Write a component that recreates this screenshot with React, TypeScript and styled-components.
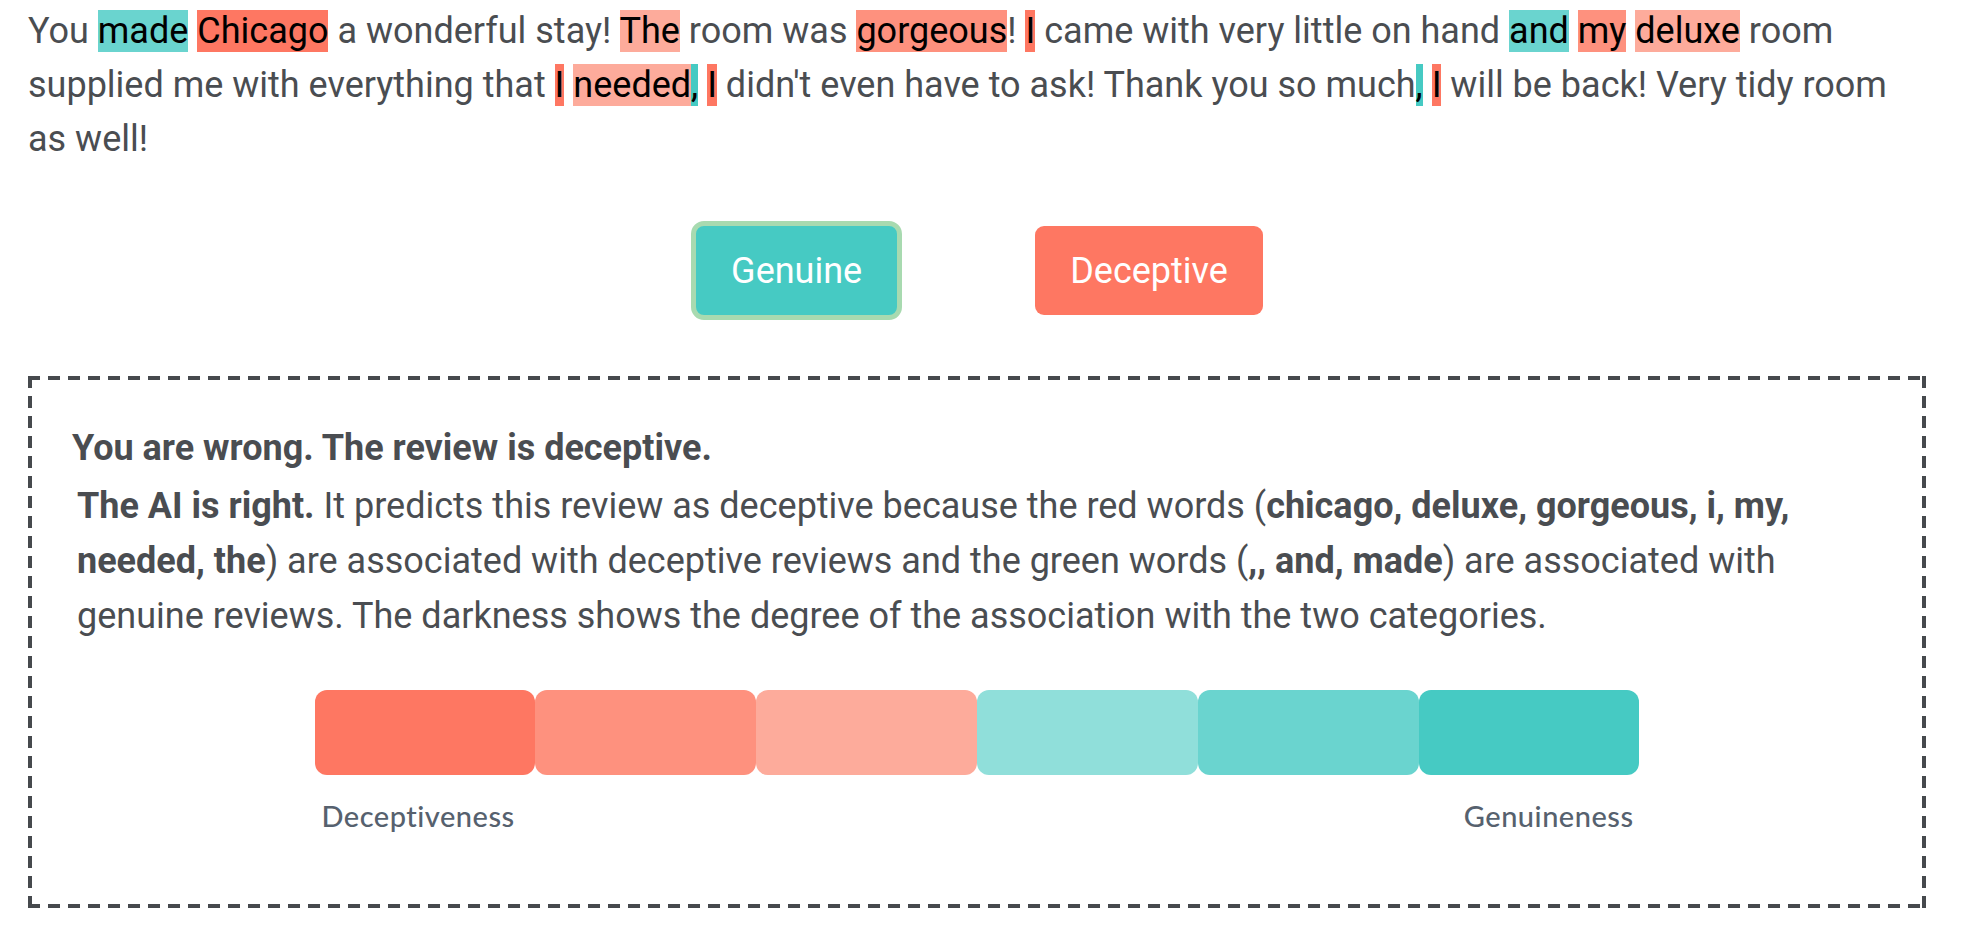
import React from "react";
import styled, { createGlobalStyle } from "styled-components";

const GlobalStyle = createGlobalStyle`
  html, body {
    margin: 0;
    padding: 0;
    background: #ffffff;
  }
  body {
    font-family: Roboto, "Liberation Sans", Arial, sans-serif;
    color: #4a4d51;
  }
`;

type Tone = "red3" | "red2" | "red1" | "teal1" | "teal2" | "teal3";

const toneColor: Record<Tone, string> = {
  red3: "#fe7762",
  red2: "#fe917e",
  red1: "#fdab9b",
  teal1: "#90dfda",
  teal2: "#6ad4cf",
  teal3: "#46cac3",
};

const Page = styled.main`
  padding: 4px 52px 30px 28px;
`;

const Review = styled.p`
  margin: 0;
  font-size: 36px;
  line-height: 54px;
  color: #4a4d51;
`;

const Mark = styled.span<{ $tone: Tone }>`
  background: ${(p) => toneColor[p.$tone]};
  color: #000000;
`;

const ButtonRow = styled.div`
  display: flex;
  justify-content: center;
  align-items: center;
  gap: 133px;
  margin: 55px 0 56px;
`;

const ChoiceButton = styled.button<{ $kind: "genuine" | "deceptive"; $selected?: boolean }>`
  box-sizing: content-box;
  height: 89px;
  padding: 0 35px;
  font-family: Roboto, "Liberation Sans", Arial, sans-serif;
  font-size: 36px;
  color: #ffffff;
  background: ${(p) => (p.$kind === "genuine" ? "#46cac3" : "#fe7762")};
  border: ${(p) => (p.$selected ? "5px solid #a8dab0" : "none")};
  border-radius: ${(p) => (p.$selected ? "13px" : "9px")};
  cursor: pointer;
`;

const dashH = "repeating-linear-gradient(90deg, #46494d 0 12px, transparent 12px 20px)";
const dashV = "repeating-linear-gradient(180deg, #46494d 0 12px, transparent 12px 20px)";

const FeedbackBox = styled.section`
  padding: 45px 44px 75px 44px;
  background:
    ${dashH} left top / 100% 4px no-repeat,
    ${dashH} left bottom / 100% 4px no-repeat,
    ${dashV} left top / 4px 100% no-repeat,
    ${dashV} right top / 4px 100% no-repeat;
`;

const Verdict = styled.p`
  margin: 0 0 4px;
  font-size: 36px;
  line-height: 54px;
  font-weight: 700;
  color: #4a4d51;
`;

const Explanation = styled.p`
  margin: 0;
  padding-left: 5px;
  font-size: 36px;
  line-height: 55px;
  color: #4a4d51;
`;

const Scale = styled.div`
  display: flex;
  width: 1325px;
  margin: 46px auto 0;
`;

const Swatch = styled.div<{ $tone: Tone }>`
  flex: 1;
  height: 85px;
  border-radius: 12px;
  background: ${(p) => toneColor[p.$tone]};
`;

const ScaleLabels = styled.div`
  display: flex;
  justify-content: space-between;
  width: 1325px;
  box-sizing: border-box;
  padding: 0 6px 0 7px;
  margin: 23px auto 0;
  font-family: Lato, "Open Sans", sans-serif;
  font-weight: 500;
  font-size: 29px;
  line-height: 35px;
  letter-spacing: 0.5px;
  color: #56616e;
`;

const scaleTones: Tone[] = ["red3", "red2", "red1", "teal1", "teal2", "teal3"];

export default function App() {
  return (
    <>
      <GlobalStyle />
      <Page>
        <Review>
          You <Mark $tone="teal2">made</Mark> <Mark $tone="red3">Chicago</Mark> a wonderful stay!{" "}
          <Mark $tone="red1">The</Mark> room was <Mark $tone="red2">gorgeous</Mark>!{" "}
          <Mark $tone="red3">I</Mark> came with very little on hand <Mark $tone="teal2">and</Mark>{" "}
          <Mark $tone="red2">my</Mark> <Mark $tone="red1">deluxe</Mark> room supplied me with everything
          that <Mark $tone="red3">I</Mark> <Mark $tone="red1">needed</Mark>
          <Mark $tone="teal3">,</Mark> <Mark $tone="red3">I</Mark> didn't even have to ask! Thank you so
          much<Mark $tone="teal3">,</Mark> <Mark $tone="red3">I</Mark> will be back! Very tidy room as
          well!
        </Review>

        <ButtonRow>
          <ChoiceButton $kind="genuine" $selected>
            Genuine
          </ChoiceButton>
          <ChoiceButton $kind="deceptive">Deceptive</ChoiceButton>
        </ButtonRow>

        <FeedbackBox>
          <Verdict>You are wrong. The review is deceptive.</Verdict>
          <Explanation>
            <b>The AI is right.</b> It predicts this review as deceptive because the red words (
            <b>chicago, deluxe, gorgeous, i, my, needed, the</b>) are associated with deceptive reviews and
            the green words (<b>,, and, made</b>) are associated with genuine reviews. The darkness shows
            the degree of the association with the two categories.
          </Explanation>
          <Scale>
            {scaleTones.map((t) => (
              <Swatch key={t} $tone={t} />
            ))}
          </Scale>
          <ScaleLabels>
            <span>Deceptiveness</span>
            <span>Genuineness</span>
          </ScaleLabels>
        </FeedbackBox>
      </Page>
    </>
  );
}
